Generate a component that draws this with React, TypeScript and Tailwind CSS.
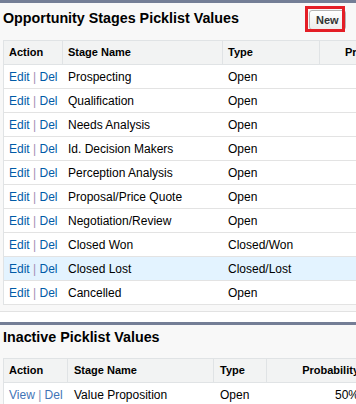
const activeRows = [
  { name: 'Prospecting', type: 'Open' },
  { name: 'Qualification', type: 'Open' },
  { name: 'Needs Analysis', type: 'Open' },
  { name: 'Id. Decision Makers', type: 'Open' },
  { name: 'Perception Analysis', type: 'Open' },
  { name: 'Proposal/Price Quote', type: 'Open' },
  { name: 'Negotiation/Review', type: 'Open' },
  { name: 'Closed Won', type: 'Closed/Won' },
  { name: 'Closed Lost', type: 'Closed/Lost', highlight: true },
  { name: 'Cancelled', type: 'Open' },
];

function Button({ label }: { label: string }) {
  return (
    <div className="h-[20px] px-[6px] flex items-center border border-[#b5b5b5] rounded-[3px] bg-gradient-to-b from-white to-[#ececec] text-[11px] font-bold text-[#333]">
      {label}
    </div>
  );
}

export default function App() {
  return (
    <div className="w-[356px] h-[404px] overflow-hidden bg-white font-['Liberation_Sans',Arial,sans-serif] text-black">
      <div className="w-[440px]">
        {/* Active values */}
        <div className="border-t-[3px] border-[#747e96] border-b border-b-[#e2e2e2] bg-[#f8f8f8] pb-[6px]">
          <div className="h-[37px] flex items-start pl-[3px]">
            <div className="w-[306px] mt-[5px] leading-[20px] text-[14.3px] font-bold">
              Opportunity Stages Picklist Values
            </div>
            <div className="mt-[7px] flex gap-[10px]">
              <div className="relative">
                <Button label="New" />
                <span className="absolute -left-[4px] -top-[4px] w-[40px] h-[26px] border-[3px] border-[#e41e26]" />
              </div>
              <Button label="Reorder" />
            </div>
          </div>
          <div className="ml-[3px] border-t border-l border-[#e0e3e5] bg-white text-[12px]">
            <div className="h-[24px] flex bg-[#f2f3f3] border-b border-[#e0e3e5] text-[11px] font-bold">
              <div className="w-[59px] pl-[5px] flex items-center border-r border-[#e0e3e5]">Action</div>
              <div className="w-[160px] pl-[5px] flex items-center border-r border-[#e0e3e5]">Stage Name</div>
              <div className="w-[97px] pl-[5px] flex items-center border-r border-[#e0e3e5]">Type</div>
              <div className="pl-[25px] flex items-center">Probability (%)</div>
            </div>
            {activeRows.map((r) => (
              <div
                key={r.name}
                className={`h-[24px] flex items-center border-b border-[#e3e3e3] ${r.highlight ? 'bg-[#e3f3ff]' : ''}`}
              >
                <div className="w-[59px] pl-[5px]">
                  <span className="text-[#015ba7]">Edit</span>
                  <span className="text-[#a58fb5]"> | </span>
                  <span className="text-[#015ba7]">Del</span>
                </div>
                <div className="w-[160px] pl-[5px]">{r.name}</div>
                <div className="w-[97px] pl-[5px]">{r.type}</div>
              </div>
            ))}
          </div>
        </div>

        <div className="h-[10px]" />

        {/* Inactive values */}
        <div className="border-t-[3px] border-[#747e96] bg-[#f8f8f8]">
          <div className="h-[31px] pl-[3px]">
            <div className="mt-[2px] leading-[20px] text-[14.3px] font-bold">Inactive Picklist Values</div>
          </div>
          <div className="ml-[3px] w-[363px] border-t border-l border-[#e0e3e5] bg-white text-[12px]">
            <div className="h-[24px] flex bg-[#f2f3f3] border-b border-[#e0e3e5] text-[11px] font-bold">
              <div className="w-[64px] pl-[5px] flex items-center border-r border-[#e0e3e5]">Action</div>
              <div className="w-[146px] pl-[6px] flex items-center border-r border-[#e0e3e5]">Stage Name</div>
              <div className="w-[53px] pl-[6px] flex items-center border-r border-[#e0e3e5]">Type</div>
              <div className="flex-1 pr-[7px] flex items-center justify-end">Probability</div>
            </div>
            <div className="h-[24px] flex items-center border-b border-[#e3e3e3]">
              <div className="w-[64px] pl-[5px]">
                <span className="text-[#3f74b6]">View</span>
                <span className="text-[#7b93b8]"> | </span>
                <span className="text-[#3f74b6]">Del</span>
              </div>
              <div className="w-[146px] pl-[6px]">Value Proposition</div>
              <div className="w-[53px] pl-[6px]">Open</div>
              <div className="flex-1 pr-[7px] text-right">50%</div>
            </div>
          </div>
        </div>
      </div>
    </div>
  );
}
